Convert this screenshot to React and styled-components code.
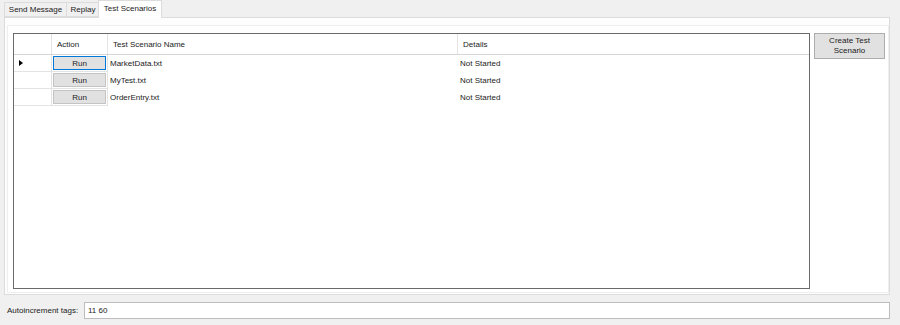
import styled, { createGlobalStyle } from "styled-components";

const GlobalStyle = createGlobalStyle`
  html, body {
    margin: 0;
    padding: 0;
    background-color: #f0f0f0;
  }
  body {
    font-family: "Liberation Sans", Arial, sans-serif;
    font-size: 8px;
    color: #222222;
  }
`;

const tabs = ["Send Message", "Replay", "Test Scenarios"];

const scenarios = [
  { name: "MarketData.txt", details: "Not Started" },
  { name: "MyTest.txt", details: "Not Started" },
  { name: "OrderEntry.txt", details: "Not Started" },
];

function App() {
  const selectedTab = 2;

  return (
    <Window>
      <GlobalStyle />
      <TabStrip>
        {tabs.map((t, i) => (
          <Tab key={t} $selected={i === selectedTab} $width={[62, 33, 64][i]}>
            {t}
          </Tab>
        ))}
      </TabStrip>
      <TabPage>
        <PageInner>
          <Grid>
            <HeaderRow>
              <RowHeaderCell $header />
              <HeaderCell $width={56}>Action</HeaderCell>
              <HeaderCell $width={350}>Test Scenario Name</HeaderCell>
              <HeaderCell $last>Details</HeaderCell>
            </HeaderRow>
            {scenarios.map((s, i) => (
              <BodyRow key={s.name}>
                <RowHeaderCell>{i === 0 ? <CurrentArrow /> : null}</RowHeaderCell>
                <ActionCell>
                  <RunButton $focused={i === 0}>Run</RunButton>
                </ActionCell>
                <TextCell $width={350}>{s.name}</TextCell>
                <TextCell>{s.details}</TextCell>
              </BodyRow>
            ))}
          </Grid>
          <SideButtons>
            <CreateButton>
              Create Test
              <br />
              Scenario
            </CreateButton>
          </SideButtons>
        </PageInner>
      </TabPage>
      <BottomBar>
        <FieldLabel>Autoincrement tags:</FieldLabel>
        <TextBox>11 60</TextBox>
      </BottomBar>
    </Window>
  );
}

const Window = styled.div`
  width: 900px;
  height: 325px;
  display: flex;
  flex-direction: column;
  overflow: hidden;
`;
const TabStrip = styled.div`
  display: flex;
  align-items: flex-end;
  height: 18px;
  padding-left: 4px;
  position: relative;
  z-index: 1;
`;
const Tab = styled.div`
  box-sizing: border-box;
  width: ${(p) => p.$width}px;
  height: ${(p) => (p.$selected ? 18 : 15)}px;
  margin-bottom: ${(p) => (p.$selected ? 0 : 1)}px;
  margin-left: ${(p) => (p.$selected ? -1 : 0)}px;
  border: 1px solid #dcdcdc;
  border-bottom: ${(p) => (p.$selected ? "none" : "1px solid #dcdcdc")};
  border-right: ${(p) => (p.$selected ? "1px solid #dcdcdc" : "none")};
  background-color: ${(p) => (p.$selected ? "#ffffff" : "#f0f0f0")};
  display: flex;
  align-items: center;
  justify-content: center;
  padding-bottom: ${(p) => (p.$selected ? 2 : 0)}px;
  white-space: nowrap;
  &:nth-child(2) {
    border-right: none;
  }
`;
const TabPage = styled.div`
  box-sizing: border-box;
  margin-left: 4px;
  margin-top: -1px;
  width: 886px;
  height: 278px;
  border: 1px solid #dcdcdc;
  background-color: #fdfdfd;
  padding: 7px 1px 1px 2px;
  display: flex;
`;
const PageInner = styled.div`
  flex: 1;
  display: flex;
  gap: 4px;
  border: 1px solid #eeeeee;
  background-color: #ffffff;
  padding: 7px 3px 3px 5px;
`;
const Grid = styled.div`
  box-sizing: border-box;
  width: 797px;
  height: 256px;
  border: 1px solid #6a6a6a;
  background-color: #ffffff;
  display: flex;
  flex-direction: column;
`;
const HeaderRow = styled.div`
  display: flex;
  height: 21px;
  box-sizing: border-box;
  border-bottom: 1px solid #d5d5d5;
`;
const BodyRow = styled.div`
  display: flex;
  height: 17px;
  box-sizing: border-box;
`;
const RowHeaderCell = styled.div`
  box-sizing: border-box;
  width: 38px;
  flex-shrink: 0;
  border-right: 1px solid #e3e3e3;
  border-bottom: ${(p) => (p.$header ? "none" : "1px solid #e3e3e3")};
  display: flex;
  align-items: center;
  padding-left: 5px;
`;
const CurrentArrow = styled.span`
  width: 0;
  height: 0;
  border-top: 3px solid transparent;
  border-bottom: 3px solid transparent;
  border-left: 4px solid #000000;
`;
const HeaderCell = styled.div`
  box-sizing: border-box;
  ${(p) => (p.$last ? "flex: 1;" : `width: ${p.$width}px; flex-shrink: 0;`)}
  border-right: ${(p) => (p.$last ? "none" : "1px solid #e5e5e5")};
  display: flex;
  align-items: center;
  padding-left: 5px;
`;
const ActionCell = styled.div`
  box-sizing: border-box;
  width: 56px;
  flex-shrink: 0;
  border-right: 1px solid #e3e3e3;
  border-bottom: 1px solid #e3e3e3;
  padding: 1px;
  display: flex;
`;
const RunButton = styled.div`
  flex: 1;
  box-sizing: border-box;
  background-color: #e1e1e1;
  border: 1px solid ${(p) => (p.$focused ? "#0078d7" : "#c4c4c4")};
  display: flex;
  align-items: center;
  justify-content: center;
`;
const TextCell = styled.div`
  box-sizing: border-box;
  ${(p) => (p.$width ? `width: ${p.$width}px; flex-shrink: 0;` : "flex: 1;")}
  display: flex;
  align-items: center;
  padding-left: 2px;
  white-space: nowrap;
`;
const SideButtons = styled.div`
  display: flex;
  flex-direction: column;
`;
const CreateButton = styled.div`
  box-sizing: border-box;
  width: 71px;
  height: 26px;
  background-color: #e1e1e1;
  border: 1px solid #adadad;
  display: flex;
  align-items: center;
  justify-content: center;
  text-align: center;
  line-height: 10px;
`;
const BottomBar = styled.div`
  display: flex;
  align-items: center;
  padding: 7px 0 0 7px;
`;
const FieldLabel = styled.div`
  width: 77px;
  white-space: nowrap;
`;
const TextBox = styled.div`
  box-sizing: border-box;
  width: 806px;
  height: 17px;
  border: 1px solid #bdbdbd;
  background-color: #ffffff;
  display: flex;
  align-items: center;
  padding-left: 3px;
`;

export default App;
